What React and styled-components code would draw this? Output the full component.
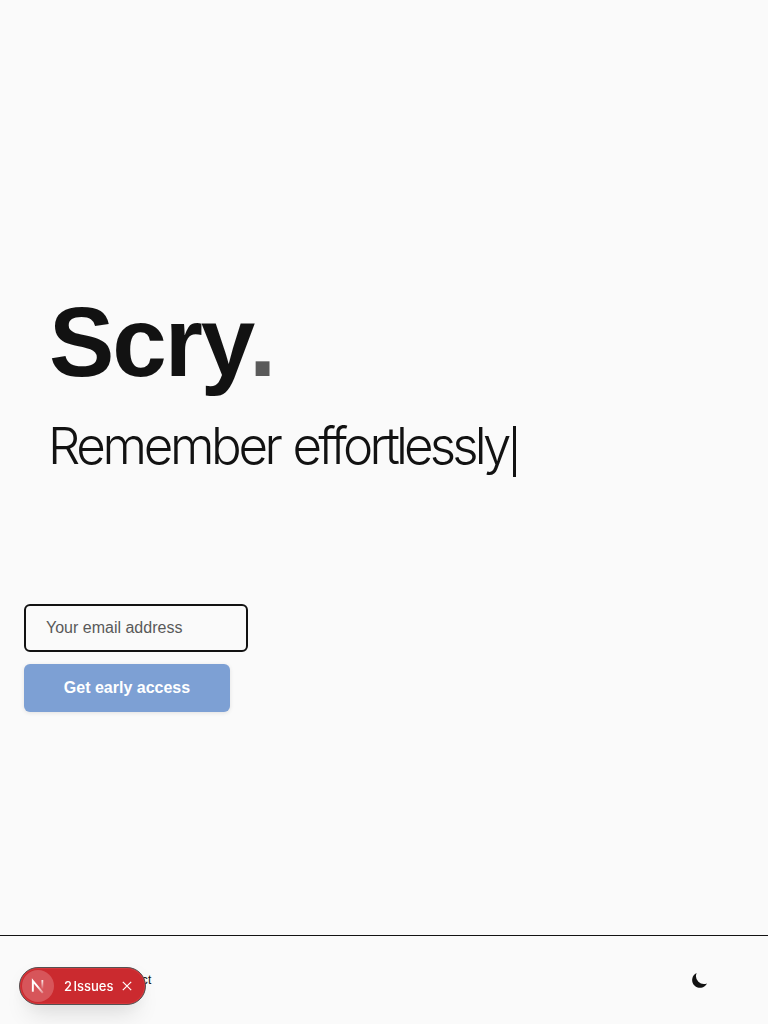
import React from "react";
import styled, { createGlobalStyle } from "styled-components";

const GlobalStyle = createGlobalStyle`
  *, *::before, *::after { box-sizing: border-box; }
  body {
    margin: 0;
    background: #fafafa;
    color: #121212;
    font-family: "Liberation Sans", Arial, sans-serif;
  }
`;

const Page = styled.div`
  min-height: 1024px;
  display: flex;
  flex-direction: column;
`;

const Main = styled.main`
  flex: 1;
  padding: 294px 24px 0;
`;

const Hero = styled.section`
  padding: 0 25px;
`;

const Title = styled.h1`
  margin: 0;
  font-size: 98px;
  line-height: 96px;
  font-weight: 700;
  letter-spacing: -2.1px;
`;

const Dot = styled.span`
  margin-left: -4px;
  color: #5a5a5a;
`;

const Tagline = styled.p`
  margin: 26px 0 0 -1px;
  height: 60px;
  display: flex;
  align-items: center;
  font-family: Inter, "Liberation Sans", sans-serif;
  font-size: 51px;
  line-height: 60px;
  font-weight: 300;
  letter-spacing: -3.35px;
  word-spacing: 2px;
  white-space: nowrap;
`;

const Emphasis = styled.span`
  letter-spacing: -3.85px;
`;

const Caret = styled.span`
  width: 3px;
  height: 51px;
  margin: 10px 0 0 5px;
  background: #121212;
`;

const Form = styled.form`
  margin-top: 128px;
  display: flex;
  flex-direction: column;
  align-items: flex-start;
  gap: 12px;
`;

const EmailInput = styled.input`
  width: 224px;
  height: 48px;
  padding: 0 20px;
  border: 2px solid #121212;
  border-radius: 6px;
  outline: none;
  background: #fafafa;
  font: 400 16px/24px "Liberation Sans", Arial, sans-serif;
  color: #121212;
  &::placeholder { color: #595959; opacity: 1; }
`;

const SubmitButton = styled.button`
  width: 206px;
  height: 48px;
  padding: 0;
  border: 0;
  border-radius: 6px;
  background: #7da0d4;
  color: #fff;
  box-shadow: 0 1px 4px rgba(0, 0, 0, 0.1);
  font: 700 16px/24px "Liberation Sans", Arial, sans-serif;
`;

const Footer = styled.footer`
  height: 89px;
  padding: 0 60px 0 109px;
  border-top: 1px solid #121212;
  display: flex;
  align-items: center;
  justify-content: space-between;
`;

const FooterLink = styled.a`
  font-size: 12px;
  line-height: 16px;
  letter-spacing: 0.15px;
`;

const MoonIcon = styled.svg`
  width: 17px;
  height: 17px;
`;

const IssuesBadge = styled.div`
  position: fixed;
  left: 19px;
  bottom: 19px;
  width: 127px;
  height: 38px;
  padding-left: 2px;
  display: flex;
  align-items: center;
  border-radius: 19px;
  background: #cb2a2f;
  border: 1px solid #555051;
  color: #fff;
  box-shadow: inset 0 0 0 1px #d6373b, 0 16px 24px -8px rgba(0, 0, 0, 0.12), 0 4px 16px rgba(0, 0, 0, 0.04);
`;

const LogoDisc = styled.span`
  width: 32px;
  height: 32px;
  display: grid;
  place-items: center;
  border-radius: 50%;
  background: #d7555a;
`;

const IssueText = styled.span`
  margin-left: 10px;
  font: 500 13px/16px Inter, "Liberation Sans", sans-serif;
  word-spacing: -2px;
  white-space: nowrap;
`;

const CloseIcon = styled.svg`
  margin-left: 9px;
  width: 10px;
  height: 10px;
  flex: none;
`;

export default function App() {
  return (
    <Page>
      <GlobalStyle />
      <Main>
        <Hero>
          <Title>Scry<Dot>.</Dot></Title>
          <Tagline>
            <span>Remember <Emphasis>effortlessly</Emphasis></span>
            <Caret />
          </Tagline>
        </Hero>
        <Form>
          <EmailInput type="email" placeholder="Your email address" />
          <SubmitButton type="button">Get early access</SubmitButton>
        </Form>
      </Main>
      <Footer>
        <FooterLink>Contact</FooterLink>
        <MoonIcon viewBox="0 0 17 17">
          <path d="M5.6 1A7.8 7.8 0 1 0 16 11.4A8 8 0 0 1 5.6 1Z" fill="#121212" />
        </MoonIcon>
      </Footer>
      <IssuesBadge>
        <LogoDisc>
          <svg width="16" height="16" viewBox="0 0 14 14" fill="none">
            <defs>
              <linearGradient id="diagonal" x1="7" y1="7" x2="12" y2="14" gradientUnits="userSpaceOnUse">
                <stop stopColor="#fff" />
                <stop offset="1" stopColor="#fff" stopOpacity="0.2" />
              </linearGradient>
              <linearGradient id="stem" x1="11" y1="1" x2="11" y2="10" gradientUnits="userSpaceOnUse">
                <stop stopColor="#fff" />
                <stop offset="1" stopColor="#fff" stopOpacity="0" />
              </linearGradient>
            </defs>
            <path d="M2.5 12V2.5L11.2 13" stroke="url(#diagonal)" strokeWidth="1.7" />
            <path d="M10.8 1.8V9.5" stroke="url(#stem)" strokeWidth="1.6" />
          </svg>
        </LogoDisc>
        <IssueText>2 Issues</IssueText>
        <CloseIcon viewBox="0 0 10 10">
          <path d="M.8 .8L9.2 9.2M9.2 .8L.8 9.2" stroke="#fff" strokeWidth="1.2" />
        </CloseIcon>
      </IssuesBadge>
    </Page>
  );
}
